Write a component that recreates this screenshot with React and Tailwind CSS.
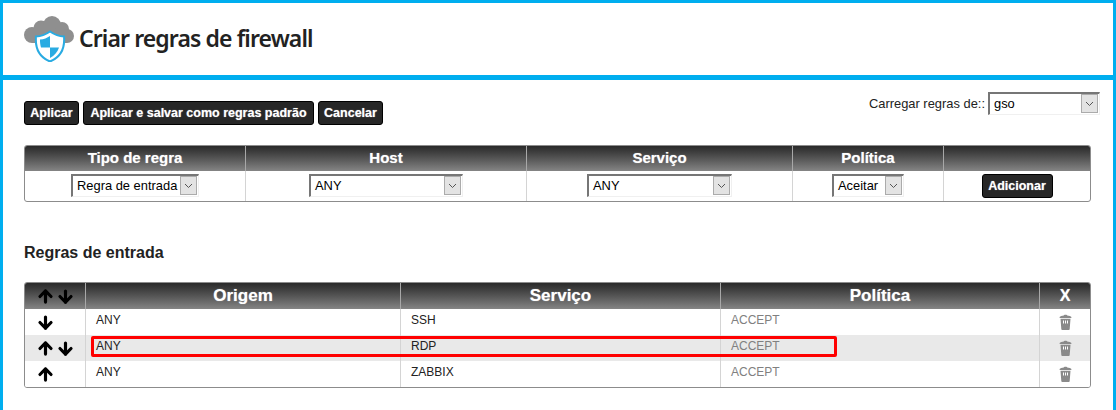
import React from 'react';
import { ArrowUp, ArrowDown } from 'lucide-react';

const rows = [
  { host: 'ANY', service: 'SSH', policy: 'ACCEPT', up: false, down: true },
  { host: 'ANY', service: 'RDP', policy: 'ACCEPT', up: true, down: true, shaded: true },
  { host: 'ANY', service: 'ZABBIX', policy: 'ACCEPT', up: true, down: false },
];

function Logo() {
  return (
    <svg width="50" height="46" viewBox="0 0 50 46" className="shrink-0">
      <g fill="#8f8f8f">
        <circle cx="8" cy="19" r="8" />
        <circle cx="17" cy="12" r="7.500" />
        <circle cx="28" cy="9" r="9" />
        <circle cx="38" cy="13" r="7" />
        <circle cx="43" cy="20" r="7" />
        <rect x="8" y="14" width="35" height="13" />
      </g>
      <path d="M26 15.500C31 19 35 20.300 40 20.500C41 32 37 41 26 45.500C15 41 11 32 12 20.500C17 20.300 21 19 26 15.500z" fill="#fff" stroke="#29abe2" strokeWidth="2" />
      <path d="M26 20C23 22 20 23.200 16 23.600C15.900 26 16.300 29 17 31.500H26z" fill="#29abe2" />
      <path d="M26 31.500H35C33.500 36 30.500 39.500 26 42z" fill="#29abe2" />
    </svg>
  );
}

function Btn({ children, className = '' }) {
  return (
    <button
      type="button"
      className={`h-6 rounded-[3px] border border-black bg-[#272727] text-[12.500px] leading-none font-bold whitespace-nowrap text-white [text-shadow:0_0_1px_rgba(255,255,255,0.6)] ${className}`}
    >
      {children}
    </button>
  );
}

function Select({ value, className = '' }) {
  return (
    <div className={`flex h-[23px] items-stretch border-t-2 border-l-2 border-t-[#767676] border-l-[#767676] border-r border-b border-r-[#f0f0f0] border-b-[#f0f0f0] bg-white ${className}`}>
      <span className="flex-1 pl-[4px] text-left text-[12.900px] leading-[20px] text-black whitespace-nowrap">{value}</span>
      <span className="mb-[1px] mr-[1px] flex w-[17px] items-center justify-center border border-[#ababab] bg-[#e3e3e3]">
        <svg width="9" height="6" viewBox="0 0 9 6" fill="none" stroke="#555" strokeWidth="1">
          <path d="M1 1l3.500 3.500L8 1" />
        </svg>
      </span>
    </div>
  );
}

function Head({ children, className = 'text-[15px]' }) {
  return (
    <div className={`flex items-center justify-center border-r border-[#a8a8a8] font-bold text-white last:border-r-0 [text-shadow:0_0_1px_rgba(255,255,255,0.6)] ${className}`}>
      {children}
    </div>
  );
}

function Cell({ children, className = '' }) {
  return (
    <div className={`flex items-start border-r border-[#d4d4d4] pl-[10px] pt-[3px] text-[12px] leading-[16px] last:border-r-0 ${className}`}>
      {children}
    </div>
  );
}

function Trash() {
  return (
    <svg width="13" height="16" viewBox="0 0 13 16">
      <path d="M4.500 1.800C4.500 .5 8.500 .5 8.500 1.800C10.500 1.800 12.500 2.200 12.500 4H.5C.5 2.200 2.500 1.800 4.500 1.800z" fill="#8a8a8a" />
      <path d="M1.500 4.800h10L10.700 15a1 1 0 0 1-1 1H3.300a1 1 0 0 1-1-1L1.500 4.800z" fill="#8a8a8a" />
      <path d="M4.500 6.500v3M6.500 6.500v3M8.500 6.500v3" stroke="#fff" strokeWidth="1" />
    </svg>
  );
}

function Arrows({ up, down, border = 'border-[#d4d4d4]' }) {
  return (
    <div className={`flex h-full items-center gap-[1px] border-r pl-[11px] ${border}`}>
      {up && <ArrowUp size={19} strokeWidth={4} color="#000" />}
      {down && <ArrowDown size={19} strokeWidth={4} color="#000" />}
    </div>
  );
}

export default function App() {
  return (
    <div className="h-[410px] overflow-hidden border-x-[3px] border-t-[3px] border-[#00aeef] bg-white font-['Liberation_Sans',Arial,sans-serif] text-[#222]">
      {/* header */}
      <div className="flex h-[77px] items-center border-b-[5px] border-[#00aeef] pl-[21px]">
        <Logo />
        <h1 className="mb-[2px] ml-[5px] font-['Noto_Sans',sans-serif] text-[23px] font-semibold tracking-[-0.9px] text-[#222]">
          Criar regras de firewall
        </h1>
      </div>

      <div className="pl-[21px] pr-[22px] pt-3">
        {/* toolbar */}
        <div className="flex items-start justify-between">
          <div className="mt-[9px] flex gap-1">
            <Btn className="w-[55px]">Aplicar</Btn>
            <Btn className="w-[231px]">Aplicar e salvar como regras padrão</Btn>
            <Btn className="w-[65px]">Cancelar</Btn>
          </div>
          <div className="-mr-[9px] flex items-center gap-[3px] text-[12.900px]">
            <span>Carregar regras de::</span>
            <Select value="gso" className="w-[112px]" />
          </div>
        </div>

        {/* add rule */}
        <div className="mt-5 overflow-hidden rounded-[3px] border border-[#8c8c8c]">
          <div className="grid h-[25px] grid-cols-[221px_281px_266px_151px_1fr] bg-gradient-to-b from-[#2a2a2a] to-[#858585]">
            <Head>Tipo de regra</Head>
            <Head>Host</Head>
            <Head>Serviço</Head>
            <Head>Política</Head>
            <Head />
          </div>
          <div className="grid h-[30px] grid-cols-[221px_281px_266px_151px_1fr]">
            <div className="flex justify-center border-r border-[#d4d4d4] pt-[3px]"><Select value="Regra de entrada" className="w-[128px]" /></div>
            <div className="flex justify-center border-r border-[#d4d4d4] pt-[3px]"><Select value="ANY" className="w-[154px]" /></div>
            <div className="flex justify-center border-r border-[#d4d4d4] pt-[3px]"><Select value="ANY" className="w-[145px]" /></div>
            <div className="flex justify-center border-r border-[#d4d4d4] pt-[3px]"><Select value="Aceitar" className="w-[72px]" /></div>
            <div className="flex justify-center pt-[3px]"><Btn className="w-[71px]">Adicionar</Btn></div>
          </div>
        </div>

        <h2 className="mt-[41px] text-[16px] leading-[20px] font-bold text-[#222]">Regras de entrada</h2>

        {/* rule list */}
        <div className="relative mt-[19px]">
          <div className="overflow-hidden rounded-[3px] border border-[#8c8c8c]">
            <div className="grid h-[26px] grid-cols-[61px_315px_320px_319px_1fr] bg-gradient-to-b from-[#2a2a2a] to-[#858585]">
              <Arrows up down border="border-[#a8a8a8]" />
              <Head className="text-[17px]">Origem</Head>
              <Head className="text-[17px]">Serviço</Head>
              <Head className="text-[17px]">Política</Head>
              <Head className="text-[16px]">X</Head>
            </div>
            {rows.map((row) => (
              <div
                key={row.service}
                className={`grid h-[26px] grid-cols-[61px_315px_320px_319px_1fr] ${row.shaded ? 'bg-[#e9e9e9]' : 'bg-white'}`}
              >
                <Arrows up={row.up} down={row.down} />
                <Cell className="text-[#222]">{row.host}</Cell>
                <Cell className="text-[#222]">{row.service}</Cell>
                <Cell className="text-[#808080]">{row.policy}</Cell>
                <div className="flex items-center justify-center"><Trash /></div>
              </div>
            ))}
          </div>
          {/* highlight box */}
          <div className="absolute left-[67px] top-[54px] h-[21px] w-[746px] rounded-[2px] border-[3px] border-[#ff0000]" />
        </div>
      </div>
    </div>
  );
}
